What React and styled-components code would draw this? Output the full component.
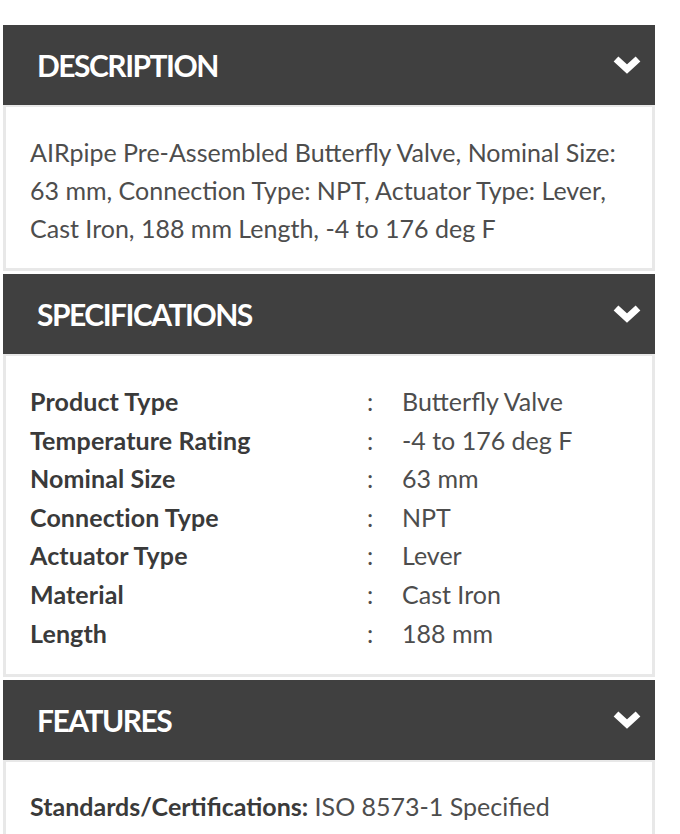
import React from 'react';
import styled, { createGlobalStyle } from 'styled-components';

const GlobalStyle = createGlobalStyle`
  body {
    margin: 0;
    background: #ffffff;
    font-family: Lato, "Noto Sans", sans-serif;
  }
`;

const Page = styled.div`
  width: 652px;
  padding: 25px 0 0 3px;
`;

const Section = styled.section`
  margin-bottom: 3px;
`;

const Header = styled.div`
  height: 80px;
  background: #404040;
  display: flex;
  align-items: center;
  justify-content: space-between;
  padding: 0 14px 0 34px;
  box-sizing: border-box;
  color: #ffffff;
`;

const HeaderTitle = styled.h2`
  margin: 0;
  font-size: 30px;
  font-weight: 700;
  letter-spacing: -1.5px;
  text-transform: uppercase;
`;

const Body = styled.div`
  background: #ffffff;
  border: 3px solid #e8e8e8;
  border-top-width: 2px;
  padding: ${p => p.pad || '26px 21px 21px 24px'};
  color: #4d4d4d;
  font-size: 25px;
  line-height: 38px;
`;

const SpecGrid = styled.div`
  display: grid;
  grid-template-columns: 337px 35px 1fr;
  row-gap: 0.6px;
`;

const Label = styled.div`
  font-weight: 700;
  color: #3a3a3a;
  letter-spacing: 0.1px;
`;

const Colon = styled.div`
  color: #4d4d4d;
`;

const Value = styled.div`
  color: #4d4d4d;
`;

const Strong = styled.span`
  font-weight: 700;
  color: #3a3a3a;
`;

const Chevron = () => (
  <svg width="28" height="20" viewBox="0 0 28 20">
    <path d="M3 4 L14 14 L25 4" fill="none" stroke="#ffffff" strokeWidth="7" strokeLinejoin="miter" />
  </svg>
);

const specs = [
  ['Product Type', 'Butterfly Valve'],
  ['Temperature Rating', '-4 to 176 deg F'],
  ['Nominal Size', '63 mm'],
  ['Connection Type', 'NPT'],
  ['Actuator Type', 'Lever'],
  ['Material', 'Cast Iron'],
  ['Length', '188 mm'],
];

function Panel({ title, pad, children }) {
  return (
    <Section>
      <Header>
        <HeaderTitle>{title}</HeaderTitle>
        <Chevron />
      </Header>
      <Body pad={pad}>{children}</Body>
    </Section>
  );
}

export default function App() {
  return (
    <Page>
      <GlobalStyle />
      <Panel title="Description">
        AIRpipe Pre-Assembled Butterfly Valve, Nominal Size: 63 mm, Connection Type: NPT, Actuator Type: Lever,
        Cast Iron, 188 mm Length, -4 to 176 deg F
      </Panel>
      <Panel title="Specifications" pad="26px 21px 22px 24px">
        <SpecGrid>
          {specs.map(([k, v]) => (
            <React.Fragment key={k}>
              <Label>{k}</Label>
              <Colon>:</Colon>
              <Value>{v}</Value>
            </React.Fragment>
          ))}
        </SpecGrid>
      </Panel>
      <Panel title="Features" pad="25px 21px 22px 24px">
        <Strong>Standards/Certifications:</Strong> ISO 8573-1 Specified
      </Panel>
    </Page>
  );
}
